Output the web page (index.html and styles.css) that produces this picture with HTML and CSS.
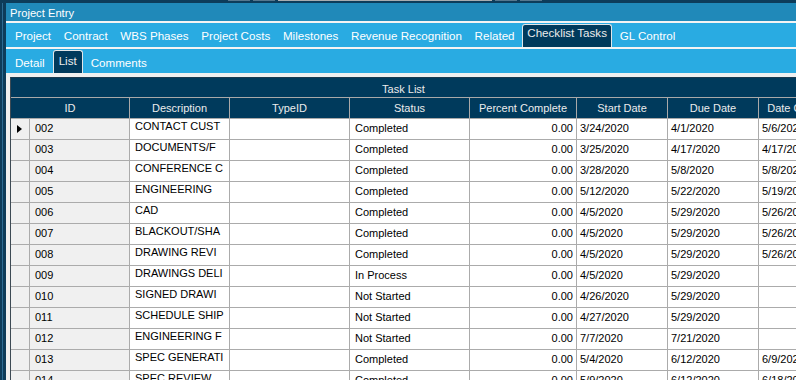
FILE: index.html
```html
<!DOCTYPE html>
<html lang="en">
<head>
    <meta charset="UTF-8">
    <meta name="viewport" content="width=device-width, initial-scale=1.0">
    <title>Project Entry</title>
    <link rel="stylesheet" href="styles.css">
</head>
<body>
    <div class="top-strip">
        <span class="seg"></span>
        <span class="seg"></span>
        <span class="seg seg-wide"></span>
        <span class="seg"></span>
        <span class="seg"></span>
    </div>
    <div class="window">
        <div class="side"></div>
        <div class="main">
            <div class="titlebar">Project Entry</div>
            <div class="tabs">
                <span class="tab">Project</span>
                <span class="tab">Contract</span>
                <span class="tab">WBS Phases</span>
                <span class="tab">Project Costs</span>
                <span class="tab">Milestones</span>
                <span class="tab">Revenue Recognition</span>
                <span class="tab">Related</span>
                <span class="tab active">Checklist Tasks</span>
                <span class="tab">GL Control</span>
            </div>
            <div class="tabs subtabs">
                <span class="tab">Detail</span>
                <span class="tab active">List</span>
                <span class="tab">Comments</span>
            </div>
            <div class="content">
                <div class="panel">
                    <div class="panel-title">Task List</div>
                    <div class="grid">
                        <div class="row head">
                            <div class="cell id-head">ID</div>
                            <div class="cell">Description</div>
                            <div class="cell">TypeID</div>
                            <div class="cell">Status</div>
                            <div class="cell">Percent Complete</div>
                            <div class="cell">Start Date</div>
                            <div class="cell">Due Date</div>
                            <div class="cell">Date Completed</div>
                        </div>
                        <div class="row">
                            <div class="cell rh"><span class="current"></span></div>
                            <div class="cell id">002</div>
                            <div class="cell desc">CONTACT CUST</div>
                            <div class="cell"></div>
                            <div class="cell status">Completed</div>
                            <div class="cell num">0.00</div>
                            <div class="cell date">3/24/2020</div>
                            <div class="cell date">4/1/2020</div>
                            <div class="cell date">5/6/2020</div>
                        </div>
                        <div class="row">
                            <div class="cell rh"></div>
                            <div class="cell id">003</div>
                            <div class="cell desc">DOCUMENTS/F</div>
                            <div class="cell"></div>
                            <div class="cell status">Completed</div>
                            <div class="cell num">0.00</div>
                            <div class="cell date">3/25/2020</div>
                            <div class="cell date">4/17/2020</div>
                            <div class="cell date">4/17/2020</div>
                        </div>
                        <div class="row">
                            <div class="cell rh"></div>
                            <div class="cell id">004</div>
                            <div class="cell desc">CONFERENCE C</div>
                            <div class="cell"></div>
                            <div class="cell status">Completed</div>
                            <div class="cell num">0.00</div>
                            <div class="cell date">3/28/2020</div>
                            <div class="cell date">5/8/2020</div>
                            <div class="cell date">5/8/2020</div>
                        </div>
                        <div class="row">
                            <div class="cell rh"></div>
                            <div class="cell id">005</div>
                            <div class="cell desc">ENGINEERING</div>
                            <div class="cell"></div>
                            <div class="cell status">Completed</div>
                            <div class="cell num">0.00</div>
                            <div class="cell date">5/12/2020</div>
                            <div class="cell date">5/22/2020</div>
                            <div class="cell date">5/19/2020</div>
                        </div>
                        <div class="row">
                            <div class="cell rh"></div>
                            <div class="cell id">006</div>
                            <div class="cell desc">CAD</div>
                            <div class="cell"></div>
                            <div class="cell status">Completed</div>
                            <div class="cell num">0.00</div>
                            <div class="cell date">4/5/2020</div>
                            <div class="cell date">5/29/2020</div>
                            <div class="cell date">5/26/2020</div>
                        </div>
                        <div class="row">
                            <div class="cell rh"></div>
                            <div class="cell id">007</div>
                            <div class="cell desc">BLACKOUT/SHA</div>
                            <div class="cell"></div>
                            <div class="cell status">Completed</div>
                            <div class="cell num">0.00</div>
                            <div class="cell date">4/5/2020</div>
                            <div class="cell date">5/29/2020</div>
                            <div class="cell date">5/26/2020</div>
                        </div>
                        <div class="row">
                            <div class="cell rh"></div>
                            <div class="cell id">008</div>
                            <div class="cell desc">DRAWING REVI</div>
                            <div class="cell"></div>
                            <div class="cell status">Completed</div>
                            <div class="cell num">0.00</div>
                            <div class="cell date">4/5/2020</div>
                            <div class="cell date">5/29/2020</div>
                            <div class="cell date">5/26/2020</div>
                        </div>
                        <div class="row">
                            <div class="cell rh"></div>
                            <div class="cell id">009</div>
                            <div class="cell desc">DRAWINGS DELI</div>
                            <div class="cell"></div>
                            <div class="cell status">In Process</div>
                            <div class="cell num">0.00</div>
                            <div class="cell date">4/5/2020</div>
                            <div class="cell date">5/29/2020</div>
                            <div class="cell date"></div>
                        </div>
                        <div class="row">
                            <div class="cell rh"></div>
                            <div class="cell id">010</div>
                            <div class="cell desc">SIGNED DRAWI</div>
                            <div class="cell"></div>
                            <div class="cell status">Not Started</div>
                            <div class="cell num">0.00</div>
                            <div class="cell date">4/26/2020</div>
                            <div class="cell date">5/29/2020</div>
                            <div class="cell date"></div>
                        </div>
                        <div class="row">
                            <div class="cell rh"></div>
                            <div class="cell id">011</div>
                            <div class="cell desc">SCHEDULE SHIP</div>
                            <div class="cell"></div>
                            <div class="cell status">Not Started</div>
                            <div class="cell num">0.00</div>
                            <div class="cell date">4/27/2020</div>
                            <div class="cell date">5/29/2020</div>
                            <div class="cell date"></div>
                        </div>
                        <div class="row">
                            <div class="cell rh"></div>
                            <div class="cell id">012</div>
                            <div class="cell desc">ENGINEERING F</div>
                            <div class="cell"></div>
                            <div class="cell status">Not Started</div>
                            <div class="cell num">0.00</div>
                            <div class="cell date">7/7/2020</div>
                            <div class="cell date">7/21/2020</div>
                            <div class="cell date"></div>
                        </div>
                        <div class="row">
                            <div class="cell rh"></div>
                            <div class="cell id">013</div>
                            <div class="cell desc">SPEC GENERATI</div>
                            <div class="cell"></div>
                            <div class="cell status">Completed</div>
                            <div class="cell num">0.00</div>
                            <div class="cell date">5/4/2020</div>
                            <div class="cell date">6/12/2020</div>
                            <div class="cell date">6/9/2020</div>
                        </div>
                        <div class="row">
                            <div class="cell rh"></div>
                            <div class="cell id">014</div>
                            <div class="cell desc">SPEC REVIEW</div>
                            <div class="cell"></div>
                            <div class="cell status">Completed</div>
                            <div class="cell num">0.00</div>
                            <div class="cell date">5/9/2020</div>
                            <div class="cell date">6/12/2020</div>
                            <div class="cell date">6/18/2020</div>
                        </div>
                    </div>
                </div>
            </div>
        </div>
    </div>
</body>
</html>
```

FILE: styles.css
```css
html, body {
    margin: 0;
    height: 380px;
    overflow: hidden;
}
body {
    font-family: "Liberation Sans", Arial, sans-serif;
    font-size: 11px;
    background: #f0f0f0;
    color: #000;
}
.top-strip {
    display: flex;
    gap: 3px;
    height: 3px;
    padding-left: 228px;
    background: #0d3c5a;
}
.seg {
    width: 22px;
    height: 1px;
    background: #56778e;
}
.seg-wide {
    width: 214px;
    background: #a9adb0;
}
.window {
    display: flex;
    height: 377px;
}
.side {
    width: 6px;
    flex-shrink: 0;
    background: linear-gradient(to right, #0d3c5a 2px, #2c6b93 2px 3px, #0d3c5a 3px);
}
.main {
    flex: 1;
    display: flex;
    flex-direction: column;
    min-width: 0;
}
.titlebar {
    height: 20px;
    box-sizing: border-box;
    padding: 2px 0 0 4px;
    line-height: 16px;
    font-size: 11.2px;
    color: #fff;
    background: #2089b9;
    border-bottom: 2px solid #f4f4f4;
}
.tabs {
    display: flex;
    gap: 2.7px;
    height: 26px;
    box-sizing: border-box;
    padding-left: 4px;
    background: #29abe2;
    border-bottom: 2px solid #f4f4f4;
    font-size: 11.6px;
    white-space: nowrap;
}
.tab {
    padding: 6px 5px 0;
    line-height: 14px;
    color: #fff;
}
.tab.active {
    margin-top: 1px;
    padding: 1px 4px 0;
    border: 1px solid #e2e6e8;
    border-bottom: none;
    border-radius: 3px 3px 0 0;
    background: #003a5c;
    color: #ececec;
}
.subtabs {
    gap: 3px;
    height: 24px;
    border-bottom: none;
}
.subtabs .tab {
    padding-top: 7px;
}
.subtabs .tab.active {
    padding: 3px 5px 0;
}
.content {
    flex: 1;
    padding: 4px 0 0 4px;
    min-height: 0;
}
.panel {
    height: 100%;
    overflow: hidden;
    border-top: 1px solid #1c3a4e;
    border-left: 1px solid #3d4a54;
}
.panel-title {
    height: 20px;
    box-sizing: border-box;
    padding-top: 3px;
    line-height: 16px;
    text-align: center;
    color: #ececec;
    background: #003a5c;
    border-bottom: 1px solid #a9a9a9;
}
.grid {
    width: 845px;
}
.row {
    display: grid;
    grid-template-columns: 19px 100px 100px 120px 120px 107px 91px 91px 97px;
    height: 21px;
}
.cell {
    box-sizing: border-box;
    height: 21px;
    padding: 2px 0 0 5px;
    line-height: 14px;
    white-space: nowrap;
    overflow: hidden;
    background: #fff;
    border-right: 1px solid #ababab;
    border-bottom: 1px solid #ababab;
}
.head .cell {
    padding: 1px 0 0;
    line-height: 19px;
    text-align: center;
    color: #ececec;
    background: #003a5c;
    border-color: #a9a9a9;
}
.head .id-head {
    grid-column: span 2;
}
.rh {
    display: flex;
    align-items: center;
    justify-content: center;
    padding: 0 1px 0 0;
    background: #f0f0f0;
}
.id {
    background: #f0f0f0;
}
.desc {
    padding-top: 0;
}
.num {
    padding: 2px 3px 0 0;
    text-align: right;
}
.date {
    padding-left: 3px;
}
.current {
    width: 0;
    height: 0;
    border-left: 5px solid #000;
    border-top: 4.5px solid transparent;
    border-bottom: 4.5px solid transparent;
}
```
